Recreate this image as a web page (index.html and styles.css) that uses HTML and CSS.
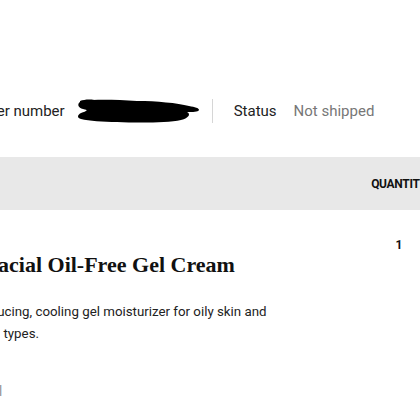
FILE: index.html
```html
<!DOCTYPE html>
<html lang="en">
<head>
<meta charset="utf-8">
<title>Order details</title>
<link rel="stylesheet" href="styles.css">
</head>
<body>
<div class="sheet">
  <div class="order-bar">
    <span class="label">Order number</span>
    <svg class="redact" width="124" height="26" viewBox="0 0 124 26" aria-hidden="true">
      <path d="M6 3 C20 1 40 2 60 3 C80 3 100 5 112 8 C118 9 122 10 122 12 C121 14 116 14 110 14 C114 16 112 20 104 22 C90 25 60 25 40 24 C26 24 12 23 4 21 C0 20 0 17 4 15 C10 13 12 12 6 11 C1 10 0 6 3 4 Z" fill="#000"/>
      <path d="M3 3 C8 1 16 1 22 3 C16 5 8 6 3 5 Z" fill="#000"/>
    </svg>
    <span class="divider"></span>
    <span class="label">Status</span>
    <span class="value">Not shipped</span>
  </div>

  <div class="table-head">
    <span class="col-product"></span>
    <span class="col-qty">QUANTITY</span>
  </div>

  <div class="item-row">
    <div class="item-details">
      <h2 class="item-name">Ultra Facial Oil-Free Gel Cream</h2>
      <p class="item-desc">Oil-reducing, cooling gel moisturizer for oily skin and all skin types.</p>
      <p class="item-size">30 ml</p>
    </div>
    <div class="item-qty">1</div>
  </div>
</div>
</body>
</html>
```

FILE: styles.css
```css
html, body {
  margin: 0;
  padding: 0;
  overflow: hidden;
  background: #fff;
}
body {
  width: 420px;
  height: 420px;
  font-family: Roboto, "Liberation Sans", sans-serif;
  color: #222;
}
.sheet {
  width: 520px;
  margin-left: -27px;
}
.order-bar {
  display: flex;
  align-items: center;
  height: 26px;
  padding-top: 98px;
  font-size: 15px;
}
.order-bar .label {
  color: #222;
}
.redact {
  margin-left: 12px;
  display: block;
}
.divider {
  width: 1px;
  height: 24px;
  background: #d6d6d6;
  margin: 0 21px 0 11px;
}
.order-bar .value {
  color: #777;
  margin-left: 17px;
}
.table-head {
  display: grid;
  grid-template-columns: 386px 80px;
  margin-top: 33px;
  height: 53px;
  align-items: center;
  background: #e8e8e8;
}
.col-qty {
  font-weight: 700;
  font-size: 12px;
  letter-spacing: -0.3px;
  text-align: center;
  color: #111;
}
.item-row {
  display: grid;
  grid-template-columns: 386px 80px;
  padding-top: 41px;
}
.item-details {
  margin-left: -14px;
}
.item-name {
  margin: 0 0 0 -30px;
  font-family: "Liberation Serif", serif;
  font-weight: 700;
  font-size: 22px;
  line-height: 28px;
  color: #111;
}
.item-desc {
  margin: 22px 0 0;
  font-size: 13.3px;
  line-height: 22px;
  width: 312px;
}
.item-size {
  margin: 36px 0 0 6px;
  font-size: 15px;
  line-height: 20px;
  color: #999;
}
.item-qty {
  text-align: center;
  font-weight: 700;
  font-size: 12px;
  color: #111;
  padding-top: 2px;
  margin-top: -15px;
}
```
